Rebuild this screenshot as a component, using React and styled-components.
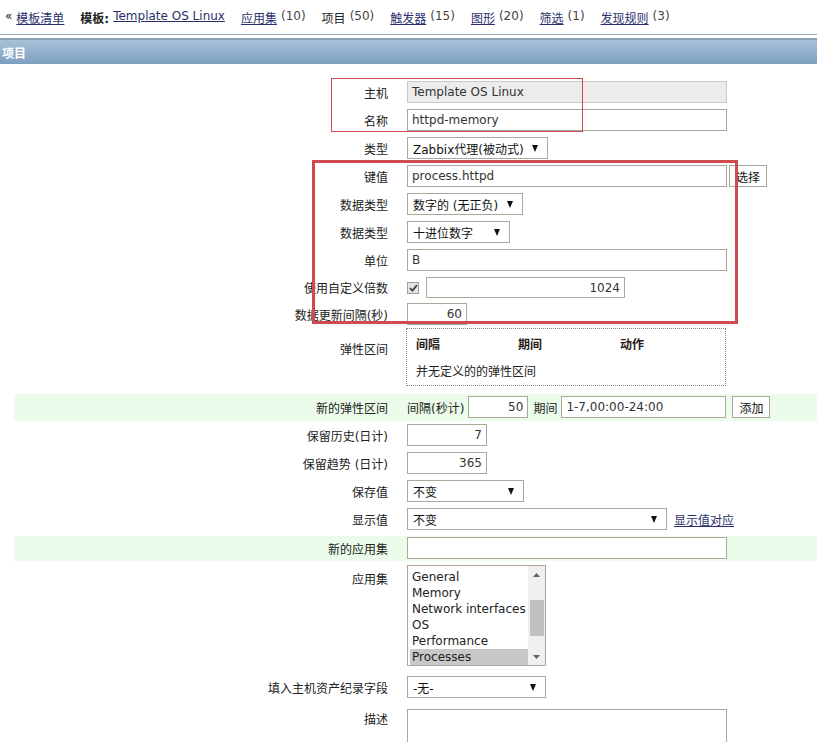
import styled, { createGlobalStyle } from "styled-components";

const Global = createGlobalStyle`
  body {
    margin: 0;
    background: #fff;
    font-family: "DejaVu Sans", "Noto Sans CJK SC", sans-serif;
    font-size: 12px;
    color: #222;
  }
`;

const Page = styled.div`
  position: relative;
  width: 817px;
  height: 742px;
  overflow: hidden;
`;

const Nav = styled.div`
  display: flex;
  align-items: center;
  height: 34px;
  padding-left: 5px;
  gap: 16px;
  white-space: nowrap;
`;

const NavItem = styled.span`
  display: inline-flex;
  gap: 4px;
  color: #222;
`;

const NavLink = styled.a`
  color: #2a2f6e;
  text-decoration: underline;
`;

const Count = styled.span`
  color: #444;
`;

const Lines = styled.div`
  height: 3px;
  border-top: 1px solid #9badbd;
  border-bottom: 2px solid #8aa0b3;
`;

const TitleBar = styled.div`
  height: 24px;
  display: flex;
  align-items: center;
  padding-left: 2px;
  color: #fff;
  font-weight: bold;
  background: linear-gradient(#a8c0d6, #7c9fc0);
`;

const Form = styled.div`
  padding-top: 14px;
`;

const Row = styled.div`
  display: grid;
  grid-template-columns: 374px 1fr;
  column-gap: 19px;
  margin-left: 14px;
  padding: ${(p) => p.$pad || "3px 0"};
  margin-top: ${(p) => p.$mt || 0};
  background: ${(p) => (p.$green ? "#ebfdea" : "transparent")};
`;

const Label = styled.div`
  text-align: right;
  align-self: ${(p) => (p.$top ? "start" : "center")};
  padding-top: ${(p) => p.$pt || 0};
  white-space: nowrap;
`;

const Field = styled.div`
  display: flex;
  align-items: center;
  gap: ${(p) => p.$gap || "2px"};
`;

const Input = styled.div`
  box-sizing: border-box;
  width: ${(p) => p.$w}px;
  height: ${(p) => p.$h || 22}px;
  border: 1px solid ${(p) => (p.$disabled ? "#c9c9c9" : "#a9a89b")};
  background: ${(p) => (p.$disabled ? "#ececec" : "#fff")};
  display: flex;
  align-items: center;
  justify-content: ${(p) => (p.$right ? "flex-end" : "flex-start")};
  padding: 0 4px;
  color: #333;
  white-space: nowrap;
`;

const Select = styled.div`
  box-sizing: border-box;
  width: ${(p) => p.$w}px;
  height: 22px;
  border: 1px solid #a9a89b;
  background: #fff;
  display: flex;
  align-items: center;
  justify-content: space-between;
  padding: 0 9px 0 5px;
  color: #111;
  white-space: nowrap;
`;

const Arrow = styled.span`
  width: 0;
  height: 0;
  border-left: 3.5px solid transparent;
  border-right: 3.5px solid transparent;
  border-top: 7px solid #111;
`;

const Button = styled.div`
  box-sizing: border-box;
  width: ${(p) => p.$w}px;
  height: 22px;
  border: 1px solid #a9a89b;
  background: #fff;
  display: flex;
  align-items: center;
  justify-content: center;
  color: #111;
  margin-left: ${(p) => p.$ml || 0};
`;

const Check = styled.span`
  box-sizing: border-box;
  width: 12px;
  height: 12px;
  border: 1px solid #a0a0a0;
  background: #e4e4e4;
  display: inline-flex;
  align-items: center;
  justify-content: center;
  margin-right: 5px;
`;

const Text = styled.span`
  margin: 0 4px 0 ${(p) => p.$ml || 0};
`;

const DisplayLink = styled.a`
  color: #2a2f6e;
  text-decoration: underline;
  margin-left: 5px;
`;

const IntervalBox = styled.div`
  box-sizing: border-box;
  width: 320px;
  height: 58px;
  border: 1px dotted #888;
  padding: 6px 9px;
  margin-left: -1px;
`;

const IntervalHead = styled.div`
  display: grid;
  grid-template-columns: 102px 102px auto;
  font-weight: bold;
  color: #2a1a1a;
  height: 16px;
`;

const IntervalEmpty = styled.div`
  margin-top: 11px;
`;

const ListBox = styled.div`
  box-sizing: border-box;
  width: 139px;
  height: 101px;
  border: 1px solid #a9a89b;
  display: flex;
  overflow: hidden;
`;

const ListItems = styled.div`
  flex: 1;
  padding: 3px 0 0 2px;
  overflow: hidden;
`;

const ListItem = styled.div`
  height: 16px;
  line-height: 16px;
  padding-left: 2px;
  white-space: nowrap;
  color: #222;
  background: ${(p) => (p.$sel ? "#c8c8c8" : "transparent")};
`;

const ScrollBar = styled.div`
  width: 17px;
  background: #f0f0f0;
  display: flex;
  flex-direction: column;
  align-items: center;
`;

const ScrollArrow = styled.div`
  height: 17px;
  display: flex;
  align-items: center;
  justify-content: center;
`;

const Thumb = styled.div`
  width: 14px;
  height: 36px;
  background: #c1c1c1;
  margin-top: 17px;
`;

const Spacer = styled.div`
  flex: 1;
`;

const TextArea = styled.div`
  box-sizing: border-box;
  width: 320px;
  height: 60px;
  border: 1px solid #a9a89b;
`;

const Mark = styled.div`
  position: absolute;
  box-sizing: border-box;
  left: ${(p) => p.$x}px;
  top: ${(p) => p.$y}px;
  width: ${(p) => p.$w}px;
  height: ${(p) => p.$h}px;
  border: ${(p) => p.$b}px solid #cf4b4f;
  pointer-events: none;
`;

const tabs = [
  { name: "应用集", count: "(10)", link: true },
  { name: "项目", count: "(50)", link: false },
  { name: "触发器", count: "(15)", link: true },
  { name: "图形", count: "(20)", link: true },
  { name: "筛选", count: "(1)", link: true },
  { name: "发现规则", count: "(3)", link: true },
];

const apps = ["General", "Memory", "Network interfaces", "OS", "Performance", "Processes"];

function Sel({ w, children }) {
  return (
    <Select $w={w}>
      <span>{children}</span>
      <Arrow />
    </Select>
  );
}

export default function App() {
  return (
    <Page>
      <Global />
      <Nav>
        <NavItem>
          <span>«</span>
          <NavLink>模板清单</NavLink>
        </NavItem>
        <NavItem>
          <b>模板:</b>
          <NavLink>Template OS Linux</NavLink>
        </NavItem>
        {tabs.map((t) => (
          <NavItem key={t.name}>
            {t.link ? <NavLink>{t.name}</NavLink> : <span>{t.name}</span>}
            <Count>{t.count}</Count>
          </NavItem>
        ))}
      </Nav>
      <Lines />
      <TitleBar>项目</TitleBar>

      <Form>
        <Row>
          <Label>主机</Label>
          <Field>
            <Input $w={320} $disabled>Template OS Linux</Input>
          </Field>
        </Row>
        <Row>
          <Label>名称</Label>
          <Field>
            <Input $w={320}>httpd-memory</Input>
          </Field>
        </Row>
        <Row>
          <Label>类型</Label>
          <Field>
            <Sel w={141}>Zabbix代理(被动式)</Sel>
          </Field>
        </Row>
        <Row>
          <Label>键值</Label>
          <Field>
            <Input $w={320}>process.httpd</Input>
            <Button $w={38}>选择</Button>
          </Field>
        </Row>
        <Row>
          <Label>数据类型</Label>
          <Field>
            <Sel w={116}>数字的 (无正负)</Sel>
          </Field>
        </Row>
        <Row>
          <Label>数据类型</Label>
          <Field>
            <Sel w={103}>十进位数字</Sel>
          </Field>
        </Row>
        <Row>
          <Label>单位</Label>
          <Field>
            <Input $w={320}>B</Input>
          </Field>
        </Row>
        <Row>
          <Label>使用自定义倍数</Label>
          <Field>
            <Check>
              <svg width="9" height="8" viewBox="0 0 9 8">
                <path d="M1 4.2 L3.4 6.6 L8 1.2" fill="none" stroke="#444" strokeWidth="1.8" />
              </svg>
            </Check>
            <Input $w={199} $h={21} $right>1024</Input>
          </Field>
        </Row>
        <Row $pad="2px 0">
          <Label>数据更新间隔(秒)</Label>
          <Field>
            <Input $w={60} $right>60</Input>
          </Field>
        </Row>
        <Row $pad="1px 0 8px">
          <Label $top $pt="12px">弹性区间</Label>
          <IntervalBox>
            <IntervalHead>
              <span>间隔</span>
              <span>期间</span>
              <span>动作</span>
            </IntervalHead>
            <IntervalEmpty>并无定义的的弹性区间</IntervalEmpty>
          </IntervalBox>
        </Row>
        <Row $green $pad="2px 0 3px">
          <Label>新的弹性区间</Label>
          <Field $gap="0">
            <Text>间隔(秒计)</Text>
            <Input $w={60} $right>50</Input>
            <Text $ml="5px">期间</Text>
            <Input $w={165}>1-7,00:00-24:00</Input>
            <Button $w={38} $ml="6px">添加</Button>
          </Field>
        </Row>
        <Row>
          <Label>保留历史(日计)</Label>
          <Field>
            <Input $w={80} $right>7</Input>
          </Field>
        </Row>
        <Row>
          <Label>保留趋势 (日计)</Label>
          <Field>
            <Input $w={80} $right>365</Input>
          </Field>
        </Row>
        <Row>
          <Label>保存值</Label>
          <Field>
            <Sel w={117}>不变</Sel>
          </Field>
        </Row>
        <Row>
          <Label>显示值</Label>
          <Field>
            <Sel w={260}>不变</Sel>
            <DisplayLink>显示值对应</DisplayLink>
          </Field>
        </Row>
        <Row $green $pad="1px 0 2px" $mt="3px">
          <Label>新的应用集</Label>
          <Field>
            <Input $w={320} />
          </Field>
        </Row>
        <Row $pad="4px 0 7px">
          <Label $top $pt="5px">应用集</Label>
          <ListBox>
            <ListItems>
              {apps.map((a) => (
                <ListItem key={a} $sel={a === "Processes"}>
                  {a}
                </ListItem>
              ))}
            </ListItems>
            <ScrollBar>
              <ScrollArrow>
                <svg width="7" height="4" viewBox="0 0 7 4">
                  <path d="M0 4 L3.5 0 L7 4 Z" fill="#606060" />
                </svg>
              </ScrollArrow>
              <Thumb />
              <Spacer />
              <ScrollArrow>
                <svg width="7" height="4" viewBox="0 0 7 4">
                  <path d="M0 0 L3.5 4 L7 0 Z" fill="#606060" />
                </svg>
              </ScrollArrow>
            </ScrollBar>
          </ListBox>
        </Row>
        <Row>
          <Label>填入主机资产纪录字段</Label>
          <Field>
            <Sel w={139}>-无-</Sel>
          </Field>
        </Row>
        <Row $pad="8px 0 0">
          <Label $top $pt="1px">描述</Label>
          <TextArea />
        </Row>
      </Form>

      <Mark $x={331} $y={78} $w={252} $h={54} $b={1.5} />
      <Mark $x={312} $y={160} $w={426} $h={164} $b={3} />
    </Page>
  );
}
